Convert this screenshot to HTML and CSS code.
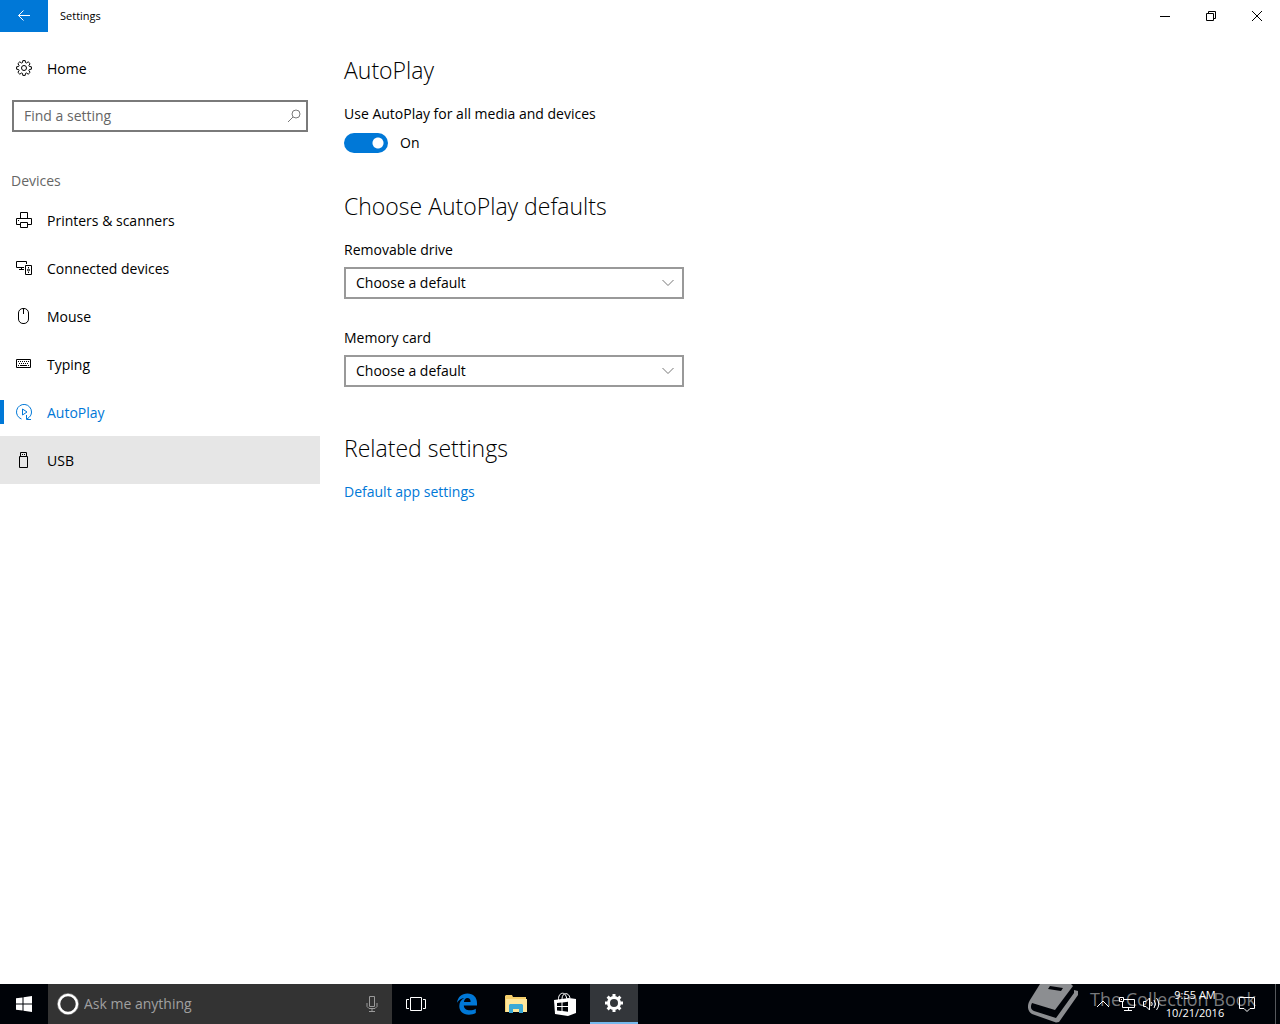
FILE: index.html
```html
<!DOCTYPE html>
<html lang="en">
<head>
    <meta charset="UTF-8">
    <meta name="viewport" content="width=device-width, initial-scale=1.0">
    <title>Settings</title>
    <link rel="stylesheet" href="styles.css">
</head>
<body>
<header class="titlebar">
    <button type="button" class="back" aria-label="Back">
        <svg width="16" height="16" viewBox="0 0 16 16"><path d="M14 7.5H2.5M7.5 2.5l-5 5 5 5"/></svg>
    </button>
    <span class="title">Settings</span>
    <button type="button" class="caption" aria-label="Minimize">
        <svg width="16" height="16" viewBox="0 0 16 16"><path d="M3 8.5h10"/></svg>
    </button>
    <button type="button" class="caption" aria-label="Restore">
        <svg width="16" height="16" viewBox="0 0 16 16"><path d="M3.5 5.5h7v7h-7zM5.5 5.5v-2h7v7h-2"/></svg>
    </button>
    <button type="button" class="caption" aria-label="Close">
        <svg width="16" height="16" viewBox="0 0 16 16"><path d="M3 3l10 10M13 3L3 13"/></svg>
    </button>
</header>

<div class="window">
    <aside class="sidebar">
        <a href="#" class="nav-item">
            <svg class="icon" width="16" height="16" viewBox="0 0 16 16"><circle cx="8" cy="8" r="2.5"/><path d="M6.8.6h2.4l.3 2 1 .4 1.7-1.2 1.9 1.9-1.2 1.7.4 1 2.1.4v2.4l-2.1.4-.4 1 1.2 1.7-1.9 1.9-1.7-1.2-1 .4-.3 2H6.8l-.3-2-1-.4-1.7 1.2-1.9-1.9 1.2-1.7-.4-1-2.1-.4V6.8l2.1-.4.4-1L1.9 3.7l1.9-1.9L5.5 3l1-.4z"/></svg>
            <span>Home</span>
        </a>
        <form class="search">
            <input type="text" placeholder="Find a setting" aria-label="Find a setting">
            <svg width="16" height="16" viewBox="0 0 16 16"><circle cx="10" cy="6" r="4"/><path d="M7 9l-5 5"/></svg>
        </form>
        <h3>Devices</h3>
        <nav>
            <a href="#" class="nav-item">
                <svg class="icon" width="16" height="16" viewBox="0 0 16 16"><path d="M4.5 6.5v-6h7v6M4.5 12.5h-4v-6h15v6h-4M4.5 10.5h7v5h-7zM2 8.5h1"/></svg>
                <span>Printers &amp; scanners</span>
            </a>
            <a href="#" class="nav-item">
                <svg class="icon" width="16" height="16" viewBox="0 0 16 16"><path d="M8 7.5H.5v-6h10V4M3 9.5h5M5.5 7.5v2M9.5 5.5h6v9h-6zM12 7.5h1M12 12.5h1"/><circle cx="12.5" cy="10" r="1"/></svg>
                <span>Connected devices</span>
            </a>
            <a href="#" class="nav-item">
                <svg class="icon" width="16" height="16" viewBox="0 0 16 16"><rect x="2.5" y=".5" width="10" height="15" rx="4.5"/><path d="M7.5 0v6"/></svg>
                <span>Mouse</span>
            </a>
            <a href="#" class="nav-item">
                <svg class="icon" width="16" height="16" viewBox="0 0 16 16"><path d="M.5 3.5h14v8H.5zM2 5.5h1m1 0h1m1 0h1m1 0h1m1 0h1m1 0h1M3 7.5h1m1 0h1m1 0h1m1 0h1m1 0h1M2 9.5h1m1 0h7m1 0h1"/></svg>
                <span>Typing</span>
            </a>
            <a href="#" class="nav-item active" aria-current="page">
                <svg class="icon" width="16" height="16" viewBox="0 0 16 16"><path d="M5.5 15A7.5 7.5 0 1 1 15.5 8c0 3-1.500 5-4.500 7M10.500 11v4.500H15M6.500 5l4.500 3-4.500 3z"/></svg>
                <span>AutoPlay</span>
            </a>
            <a href="#" class="nav-item hover">
                <svg class="icon" width="16" height="16" viewBox="0 0 16 16"><path d="M4.5 4.5v-4h6v4M3.5 4.5h8v11h-8zM6 2.5h1m1 0h1"/></svg>
                <span>USB</span>
            </a>
        </nav>
    </aside>

    <main class="content">
        <section>
            <h2>AutoPlay</h2>
            <label for="autoplay">Use AutoPlay for all media and devices</label>
            <div class="toggle-row">
                <input type="checkbox" id="autoplay" class="toggle" checked>
                <span>On</span>
            </div>
        </section>
        <section>
            <h2>Choose AutoPlay defaults</h2>
            <label for="drive">Removable drive</label>
            <div class="dropdown">
                <select id="drive"><option>Choose a default</option></select>
                <svg width="12" height="8" viewBox="0 0 12 8"><path d="M.5 1L6 6.5 11.5 1"/></svg>
            </div>
            <label for="card">Memory card</label>
            <div class="dropdown">
                <select id="card"><option>Choose a default</option></select>
                <svg width="12" height="8" viewBox="0 0 12 8"><path d="M.5 1L6 6.5 11.5 1"/></svg>
            </div>
        </section>
        <section>
            <h2>Related settings</h2>
            <a href="#" class="link">Default app settings</a>
        </section>
    </main>
</div>

<footer class="taskbar">
    <button type="button" class="task" aria-label="Start">
        <svg width="16" height="16" viewBox="0 0 16 16" fill="#fff"><path d="M0 2.3l6.5-.9v6.100H0zM7.500 1.200L16 0v7.500H7.500zM0 8.500h6.500v6.100L0 13.700zM7.500 8.500H16V16l-8.500-1.200z"/></svg>
    </button>
    <div class="cortana">
        <svg width="24" height="24" viewBox="0 0 24 24" fill="none"><circle cx="12" cy="12" r="10.5" stroke="#777"/><circle cx="12" cy="12" r="9" stroke="#fff" stroke-width="2.5"/></svg>
        <input type="text" placeholder="Ask me anything" aria-label="Ask me anything">
        <svg width="16" height="18" viewBox="0 0 16 18" fill="none" stroke="#9a9a9a"><path d="M5.5 1.5h5v10h-5zM3 8v3.5l2 2h6l2-2V8M8 13.5v3M5 16.5h6"/></svg>
    </div>
    <button type="button" class="task view" aria-label="Task View">
        <svg width="20" height="16" viewBox="0 0 20 16" fill="none" stroke="#fff"><path d="M4.5 1.5h11v13h-11zM3 3.5H.5v9H3M17 3.5h2.5v9H17"/></svg>
    </button>
    <button type="button" class="task" aria-label="Microsoft Edge">
        <svg width="20" height="22" viewBox="0 0 20 22" fill="#0078d7"><path d="M0 9.7C.7 4.2 4.7.5 10.4.5c6 0 9.6 4 9.6 9.5v2.5H6.8c.2 3.5 3 4.8 6.1 4.8 2.2 0 4.2-.6 5.9-1.6v4.4c-2 1.1-4.3 1.6-6.9 1.6-6.1 0-9.6-3.4-9.6-8.7 0-3.5 1.8-6.4 4.9-8C4.2 5.6 1.6 7.1 0 9.7zm6.9-.7h6.7c0-2.5-1-4-3.2-4C8.4 5 7.2 6.7 6.9 9z"/></svg>
    </button>
    <button type="button" class="task" aria-label="File Explorer">
        <svg width="22" height="20" viewBox="0 0 22 20"><path d="M0 2l1-1h6l1 2h13v15H0z" fill="#f5cf6b"/><path d="M1 5h21v13H1z" fill="#ffe79b"/><path d="M4 19v-8l1-1h12l1 1v8h-4v-4H8v4z" fill="#3ba9d6"/></svg>
    </button>
    <button type="button" class="task" aria-label="Store">
        <svg width="22" height="24" viewBox="0 0 22 24"><path d="M4.5 8C4 1 10-1 12 4l1 3M8 7c0-7 7-7 8-1" fill="none" stroke="#fff"/><path d="M0 8l15-2 7 1v14l-8 3-13-2z" fill="#fff"/><path d="M3 11l4.5-.5V14H3zM8.5 10.4l5.5-.6V14H8.5zM3 15h4.5v4L3 18.5zM8.5 15H14v4.7L8.5 19z" fill="#000308"/></svg>
    </button>
    <button type="button" class="task running" aria-label="Settings">
        <svg width="18" height="18" viewBox="0 0 18 18" fill="none" stroke="#fff"><circle cx="9" cy="9" r="5.5" stroke-width="3"/><path d="M9 0v3M9 15v3M0 9h3M15 9h3M2.6 2.6l2.1 2.1M13.3 13.3l2.1 2.1M2.6 15.4l2.1-2.1M13.3 4.7l2.1-2.1" stroke-width="3"/></svg>
    </button>
    <div class="watermark">
        <svg width="50" height="40" viewBox="0 0 50 40"><path d="M12 0h31l2 2-18 24L4 19C2 23 3 26 6 27l22 7L46 9V6l4 1v4L31 38l-3 .5L4 30C-1 27-1 21 2 16z" fill="#8c8e91"/><path d="M22 2l13 2-2 3-13-2z" fill="#000308"/></svg>
        <span>The Collection Book</span>
    </div>
    <div class="tray">
        <button type="button" aria-label="Show hidden icons">
            <svg width="16" height="16" viewBox="0 0 16 16"><path d="M2 11l6-6 6 6"/></svg>
        </button>
        <button type="button" aria-label="Network">
            <svg width="16" height="16" viewBox="0 0 16 16"><path d="M5 3.5h10.5v8H3.5V6M.5 1.5h4v4h-4zM9.5 11.5v3M5 14.5h8M2 3.5h1"/></svg>
        </button>
        <button type="button" aria-label="Volume">
            <svg width="17" height="16" viewBox="0 0 17 16"><path d="M.5 5.5H3L6.5 2v12L3 10.5H.5zM8.5 6q1.5 2 0 4M11 4q3 4 0 8M13.5 2q4.5 6 0 12"/></svg>
        </button>
    </div>
    <button type="button" class="clock">9:55 AM<br>10/21/2016</button>
    <button type="button" class="notify" aria-label="Action Center">
        <svg width="18" height="18" viewBox="0 0 18 18"><path d="M1.5 2.5h15v11H12l-3 3-3-3H1.5z"/></svg>
    </button>
    <button type="button" class="show-desktop" aria-label="Show desktop"></button>
</footer>
</body>
</html>
```
FILE: styles.css
```css
* {
    box-sizing: border-box;
}

body {
    display: flex;
    flex-direction: column;
    min-height: 100vh;
    margin: 0;
    background-color: #fff;
    color: #000;
    font-family: "Open Sans", "Noto Sans", sans-serif;
    font-size: 14px;
    line-height: 20px;
}

button,
input,
select {
    margin: 0;
    padding: 0;
    border: none;
    background: none;
    color: inherit;
    font: inherit;
}

svg {
    flex: none;
}

a {
    text-decoration: none;
}

/* title bar */
.titlebar {
    display: flex;
    align-items: center;
    height: 32px;
}

.titlebar svg {
    display: block;
    margin: auto;
    fill: none;
    stroke: currentColor;
}

.back {
    width: 48px;
    height: 32px;
    background-color: #0078d7;
    color: #fff;
}

.title {
    flex: 1;
    padding-left: 12px;
    font-size: 11px;
}

.caption {
    width: 46px;
    height: 32px;
}

/* layout */
.window {
    display: flex;
    flex: 1;
}

.sidebar {
    width: 320px;
    padding-top: 12px;
}

.content {
    flex: 1;
    padding: 22px 24px;
}

/* sidebar */
.nav-item {
    display: flex;
    align-items: center;
    gap: 15px;
    height: 48px;
    padding-left: 16px;
    color: #000;
}

.nav-item span {
    padding-top: 2px;
}

.icon {
    fill: none;
    stroke: currentColor;
}

.nav-item.active {
    color: #0078d7;
    background: linear-gradient(#0078d7, #0078d7) left center / 4px 24px no-repeat;
}

.nav-item.hover,
.nav-item:hover {
    background-color: #e6e6e6;
}

.search {
    display: flex;
    align-items: center;
    height: 32px;
    margin: 8px 12px 0;
    padding: 0 4px 0 10px;
    border: 2px solid #7a7a7a;
}

.search input {
    flex: 1;
    outline: none;
}

.search input::placeholder {
    color: #666;
    opacity: 1;
}

.search svg {
    fill: none;
    stroke: #7a7a7a;
}

h3 {
    margin: 39px 0 5px;
    padding-left: 11px;
    color: #666;
    font-size: 14px;
    font-weight: 400;
}

/* content */
section {
    margin-bottom: 37px;
}

h2 {
    margin: 0 0 18px;
    font-size: 23px;
    font-weight: 300;
    line-height: 32px;
}

label {
    display: block;
}

.toggle-row {
    display: flex;
    align-items: center;
    gap: 12px;
    margin-top: 9px;
}

.toggle {
    width: 44px;
    height: 20px;
    border-radius: 10px;
    background: radial-gradient(circle at 34px 10px, #fff 5px, #0078d7 6px);
    appearance: none;
}

.toggle:not(:checked) {
    background: radial-gradient(circle at 10px 10px, #fff 5px, #999 6px);
}

.dropdown {
    display: grid;
    align-items: center;
    max-width: 340px;
    margin: 7px 0 29px;
}

.dropdown select,
.dropdown svg {
    grid-area: 1 / 1;
}

.dropdown select {
    width: 100%;
    height: 32px;
    padding: 0 32px 0 10px;
    border: 2px solid #999;
    appearance: none;
}

.dropdown svg {
    justify-self: end;
    margin-right: 10px;
    fill: none;
    stroke: #777;
    pointer-events: none;
}

.dropdown:last-child {
    margin-bottom: 45px;
}

.link {
    color: #0078d7;
}

/* taskbar */
.taskbar {
    position: relative;
    display: flex;
    height: 40px;
    background-color: #000308;
    color: #fff;
}

.task {
    display: flex;
    align-items: center;
    justify-content: center;
    width: 48px;
    margin-right: 1px;
}

.task:first-child {
    margin-right: 0;
}

.task.view {
    margin-right: 3px;
}

.task.running {
    border-bottom: 2px solid #76b9ed;
    background-color: #33363a;
}

.cortana {
    display: flex;
    align-items: center;
    width: 344px;
    padding: 0 12px 0 8px;
    background-color: #333;
}

.cortana input {
    flex: 1;
    padding-left: 4px;
    outline: none;
}

.cortana input::placeholder {
    color: #a0a0a0;
    opacity: 1;
}

/* sits behind the tray icons and the clock */
.watermark {
    position: absolute;
    right: 24px;
    bottom: 0;
    display: flex;
    gap: 12px;
    color: #77797c;
    font-size: 18px;
    line-height: 30px;
}

.tray {
    position: relative;
    display: flex;
    gap: 8px;
    margin-left: auto;
}

.tray button {
    height: 40px;
}

.tray svg,
.notify svg {
    display: block;
    margin: auto;
    fill: none;
    stroke: #fff;
}

.clock {
    position: relative;
    width: 70px;
    font-size: 11px;
    line-height: 18px;
}

.notify {
    position: relative;
    width: 34px;
}

.show-desktop {
    width: 5px;
    margin-left: 11px;
    border-left: 1px solid #55585c;
}
```
